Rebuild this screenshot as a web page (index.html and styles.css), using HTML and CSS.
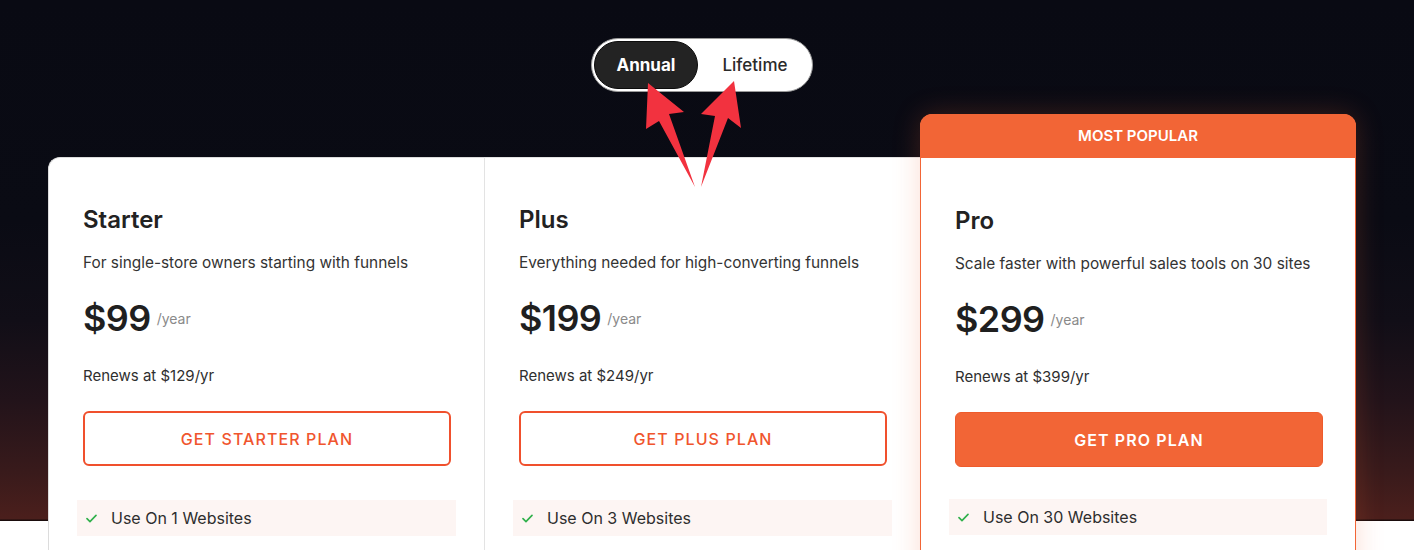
FILE: index.html
```html
<!DOCTYPE html>
<html lang="en">
<head>
<meta charset="utf-8">
<title>Pricing</title>
<link rel="stylesheet" href="styles.css">
</head>
<body>
<main class="page">
  <div class="toggle-wrap">
    <div class="toggle">
      <span class="opt active">Annual</span>
      <span class="opt">Lifetime</span>
    </div>
  </div>

  <div class="plans">
    <article class="plan plan-starter">
      <div class="plan-body">
        <h3 class="plan-name">Starter</h3>
        <p class="plan-desc">For single-store owners starting with funnels</p>
        <div class="price-row"><span class="price">$99</span><span class="per">/year</span></div>
        <p class="renew">Renews at $129/yr</p>
        <a class="btn btn-outline" href="#">GET STARTER PLAN</a>
        <ul class="features">
          <li class="feature"><svg class="check" viewBox="0 0 12 10"><path d="M1 5.2 4.3 8.4 11 1.6"/></svg>Use On 1 Websites</li>
        </ul>
      </div>
    </article>

    <article class="plan plan-plus">
      <div class="plan-body">
        <h3 class="plan-name">Plus</h3>
        <p class="plan-desc">Everything needed for high-converting funnels</p>
        <div class="price-row"><span class="price">$199</span><span class="per">/year</span></div>
        <p class="renew">Renews at $249/yr</p>
        <a class="btn btn-outline" href="#">GET PLUS PLAN</a>
        <ul class="features">
          <li class="feature"><svg class="check" viewBox="0 0 12 10"><path d="M1 5.2 4.3 8.4 11 1.6"/></svg>Use On 3 Websites</li>
        </ul>
      </div>
    </article>

    <article class="plan plan-pro">
      <div class="badge">MOST POPULAR</div>
      <div class="plan-body">
        <h3 class="plan-name">Pro</h3>
        <p class="plan-desc">Scale faster with powerful sales tools on 30 sites</p>
        <div class="price-row"><span class="price">$299</span><span class="per">/year</span></div>
        <p class="renew">Renews at $399/yr</p>
        <a class="btn btn-solid" href="#">GET PRO PLAN</a>
        <ul class="features">
          <li class="feature"><svg class="check" viewBox="0 0 12 10"><path d="M1 5.2 4.3 8.4 11 1.6"/></svg>Use On 30 Websites</li>
        </ul>
      </div>
    </article>
  </div>

  <svg class="arrows" viewBox="0 0 1414 550" aria-hidden="true">
    <polygon points="648,83 684,112 669,114 695,187 659,121 646,129"/>
    <polygon points="734,81 741,128 728,118 701,187 715,116 701,114"/>
  </svg>
</main>
</body>
</html>
```

FILE: styles.css
```css
* { box-sizing: border-box; }

html, body { margin: 0; padding: 0; }

body {
  width: 1414px;
  height: 550px;
  overflow: hidden;
  font-family: Inter, "Open Sans", Arial, sans-serif;
  color: #2b2b2b;
  background:
    linear-gradient(180deg,
      #090a13 0px,
      #0a0b14 220px,
      #110e17 320px,
      #22131a 400px,
      #381a1b 470px,
      #4b1f1c 519px,
      #1a0c0c 520px,
      #1a0c0c 521px,
      #ffffff 521px);
}

.page {
  position: relative;
  width: 1414px;
  padding: 38px 58px 0 48px;
}

.toggle-wrap {
  display: flex;
  justify-content: center;
}

.toggle {
  display: inline-flex;
  align-items: center;
  height: 54px;
  padding: 2px;
  background: #fff;
  border: 1px solid #9a9a9a;
  border-radius: 28px;
}

.opt {
  height: 48px;
  line-height: 48px;
  padding: 0 23px 0 24px;
  font-size: 17px;
  font-weight: 500;
  color: #2a2a2a;
  border-radius: 24px;
}

.opt.active {
  padding: 0 22px;
  background: #232323;
  border: 1px solid #0c0c0c;
  line-height: 46px;
  color: #fff;
  font-weight: 700;
}

.plans {
  display: flex;
  align-items: flex-start;
  margin-top: 22px;
}

.plan {
  width: 436px;
  background: #fff;
}

.plan-starter {
  margin-top: 43px;
  border: 1px solid #dcdcdc;
  border-right: none;
  border-radius: 12px 0 0 0;
}

.plan-plus {
  margin-top: 43px;
  border: 1px solid #e3e3e3;
  border-right: none;
}

.plan-pro {
  position: relative;
  z-index: 1;
  border: 1px solid #f26536;
  border-radius: 12px 12px 0 0;
  box-shadow: 0 0 28px rgba(242, 101, 54, 0.22);
}

.badge {
  height: 44px;
  line-height: 44px;
  margin: -1px -1px 0;
  text-align: center;
  background: #f26536;
  color: #fff;
  font-size: 15px;
  font-weight: 600;
  border-radius: 12px 12px 0 0;
}

.plan-body {
  padding: 47px 33px 60px 34px;
}

.plan-pro .plan-body {
  padding-top: 48px;
}

.plan-name {
  margin: 0;
  font-size: 24px;
  line-height: 30px;
  font-weight: 600;
  color: #222;
}

.plan-desc {
  margin: 17px 0 0;
  font-size: 15.4px;
  line-height: 22px;
  color: #333;
}

.price-row {
  display: flex;
  align-items: baseline;
  margin-top: 22px;
  height: 44px;
}

.price {
  font-size: 36px;
  line-height: 44px;
  font-weight: 600;
  color: #1f1f1f;
  letter-spacing: -0.6px;
}

.per {
  margin-left: 6px;
  font-size: 14px;
  color: #8a8a8a;
  position: relative;
  top: -7px;
}

.renew {
  margin: 25px 0 0;
  font-size: 15px;
  line-height: 22px;
  color: #2f2f2f;
}

.btn {
  display: flex;
  align-items: center;
  justify-content: center;
  width: 368px;
  height: 55px;
  margin-top: 24px;
  border-radius: 6px;
  font-size: 16px;
  font-weight: 500;
  letter-spacing: 1.1px;
  text-decoration: none;
}

.btn-outline {
  border: 2px solid #f0502d;
  color: #f0552e;
  background: #fff;
}

.btn-solid {
  background: #f26536;
  border: 1px solid #ee5b2c;
  color: #fff;
  font-weight: 600;
}

.features {
  list-style: none;
  margin: 34px -5px 0 -6px;
  padding: 0;
}

.plan-pro .features {
  margin-top: 32px;
}

.feature {
  display: flex;
  align-items: center;
  height: 36px;
  padding-left: 9px;
  background: #fdf5f3;
  font-size: 16px;
  color: #2e2e2e;
}

.check {
  width: 11px;
  height: 9px;
  margin-right: 14px;
  fill: none;
  stroke: #2fb04a;
  stroke-width: 1.8;
  stroke-linecap: round;
  stroke-linejoin: round;
}

.arrows {
  position: absolute;
  left: 0;
  top: 0;
  width: 1414px;
  height: 550px;
  pointer-events: none;
  z-index: 5;
}

.arrows polygon {
  fill: #f2323f;
}
```
